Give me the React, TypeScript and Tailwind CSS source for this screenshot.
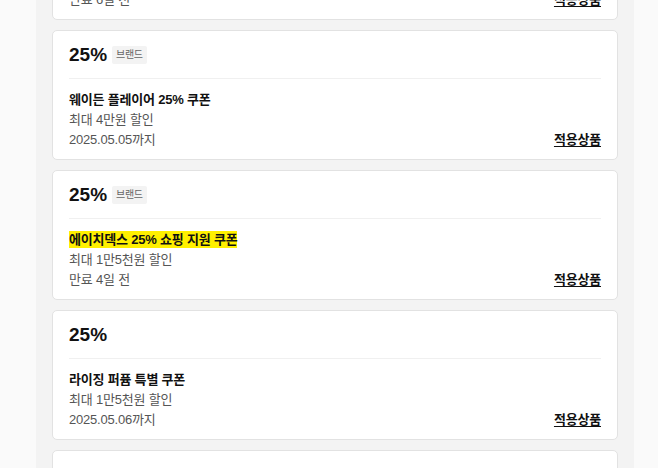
import React from "react";

type Coupon = {
  rate: string;
  badge?: string;
  title: string;
  highlight?: boolean;
  max: string;
  until: string;
};

const coupons: Coupon[] = [
  { rate: "25%", badge: "브랜드", title: "웨이든 플레이어 25% 쿠폰", max: "최대 4만원 할인", until: "2025.05.05까지" },
  { rate: "25%", badge: "브랜드", title: "에이치덱스 25% 쇼핑 지원 쿠폰", highlight: true, max: "최대 1만5천원 할인", until: "만료 4일 전" },
  { rate: "25%", title: "라이징 퍼퓸 특별 쿠폰", max: "최대 1만5천원 할인", until: "2025.05.06까지" },
];

const font = { fontFamily: '"Liberation Sans", "Noto Sans CJK KR", sans-serif' };

function Card({ c }: { c: Coupon }) {
  return (
    <div className="bg-white border border-[#e2e2e2] rounded-[5px] px-4 shrink-0 h-[130px]">
      <div className="pt-3 pb-[11px] border-b border-[#f0f0f0] flex items-center gap-[5px] h-[48px]">
        <span className="text-[19px] leading-6 font-semibold text-[#111]">{c.rate}</span>
        {c.badge && (
          <span className="bg-[#f3f3f3] text-[#666] text-[10px] leading-[18px] px-[4px] rounded-[2px] tracking-[-0.3px]">{c.badge}</span>
        )}
      </div>
      <div className="pt-[11px] text-[13px] leading-5 tracking-[-0.2px]">
        <div className="font-bold text-[#111]">
          {c.highlight ? <span className="bg-[#fff000] py-[1px]">{c.title}</span> : c.title}
        </div>
        <div className="text-[#555]">{c.max}</div>
        <div className="flex justify-between">
          <span className="text-[#555]">{c.until}</span>
          <span className="font-semibold text-[#111] underline underline-offset-2">적용상품</span>
        </div>
      </div>
    </div>
  );
}

export default function App() {
  return (
    <div className="w-[658px] h-[468px] overflow-hidden bg-[#fafafa]" style={font}>
      <div className="ml-[36px] w-[598px] h-[600px] bg-[#f3f3f3] px-4 flex flex-col gap-[10px] -mt-[110px]">
        <Card c={{ rate: "25%", badge: "브랜드", title: "쿠폰", max: "최대 할인", until: "만료 6일 전" }} />
        {coupons.map((c, i) => (
          <Card key={i} c={c} />
        ))}
        <Card c={{ rate: "25%", title: "쿠폰", max: "최대 할인", until: "만료" }} />
      </div>
    </div>
  );
}
